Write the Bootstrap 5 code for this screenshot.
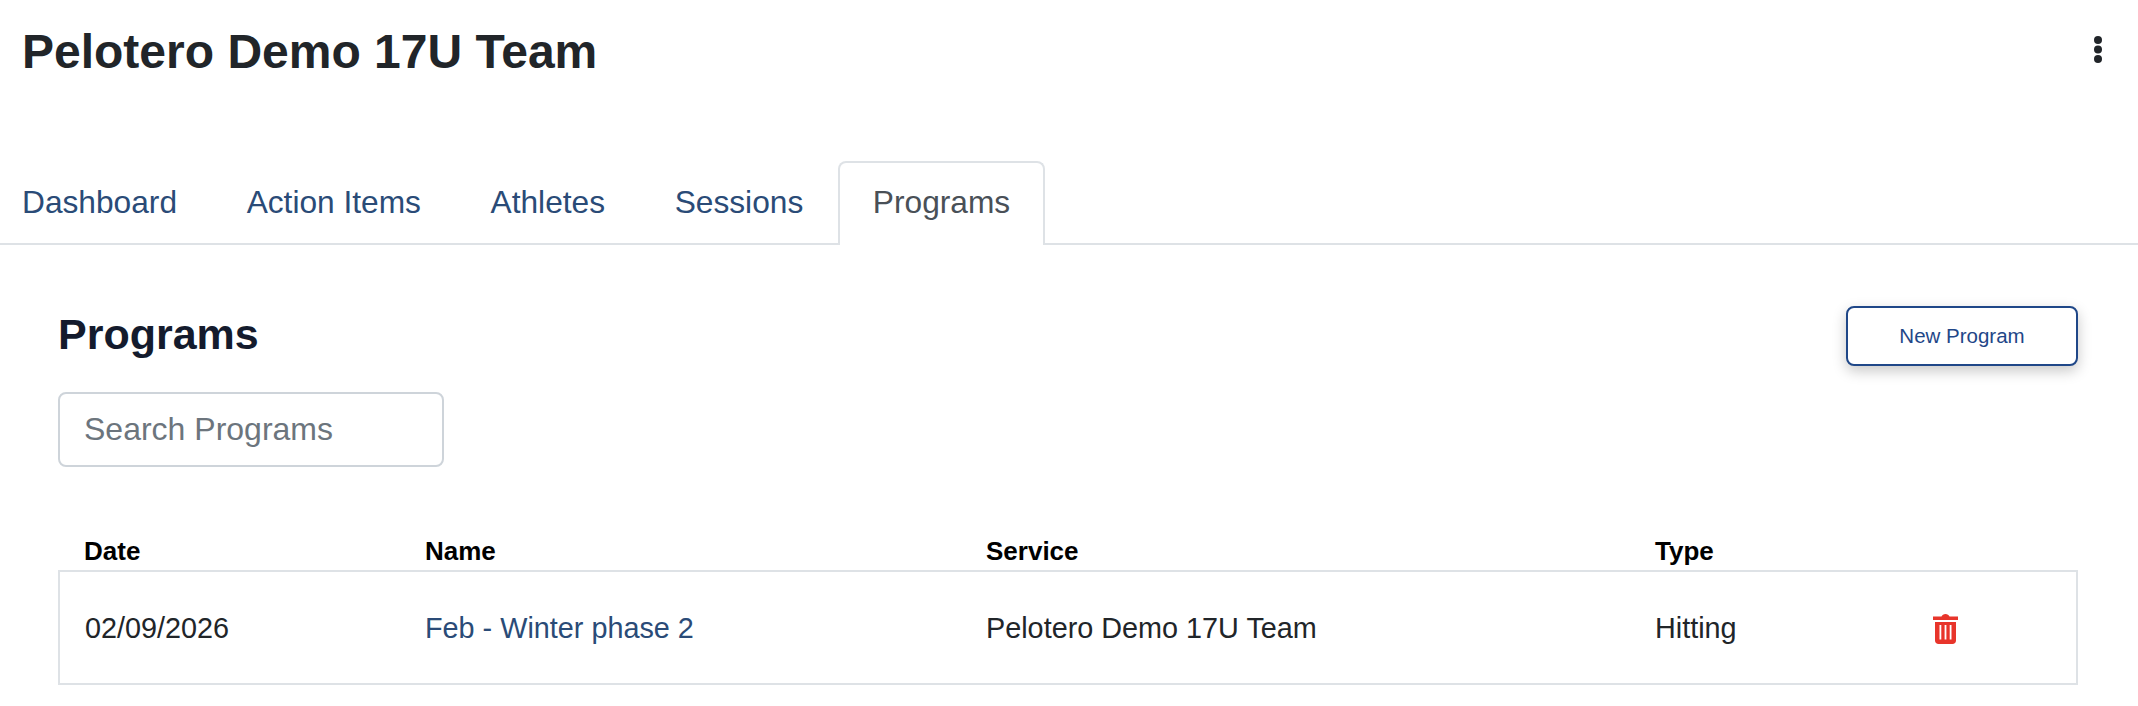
<!DOCTYPE html>
<html lang="en">
<head>
    <meta charset="UTF-8">
    <meta name="viewport" content="width=device-width, initial-scale=1.0">
    <title>Programs</title>
    <link rel="stylesheet" href="https://cdn.jsdelivr.net/npm/bootstrap@5.3.0/dist/css/bootstrap.min.css">
    <style>
        body { font-family: "Liberation Sans", Arial, sans-serif; color: #212529; background: #fff; }
        .team-header { height: 161px; padding: 22px 36px 0 22px; }
        .team-title { font-family: "Liberation Sans", Arial, sans-serif; font-weight: 700; font-size: 48px; line-height: 60px; margin: 0; color: #212529; }
        .kebab { width: 8px; height: 27px; margin-top: 14px; }
        .main-tabs { border-bottom: 2px solid #dee2e6; }
        .main-tabs .nav-link { font-size: 31.7px; line-height: 40px; padding: 19px 32.800px; color: #2a4b77; border: 2px solid transparent; border-bottom: 0; margin-bottom: -2px; border-radius: 8px 8px 0 0; height: 84px; }
        .main-tabs .nav-item:first-child .nav-link { padding-left: 20px; }
        .main-tabs .nav-link.active { color: #495057; background: #fff; border-color: #dee2e6; }
        .page-body { padding: 61px 60px 0 58px; }
        .page-heading { font-family: "Liberation Sans", Arial, sans-serif; font-weight: 700; font-size: 43px; line-height: 60px; margin: -2px 0 2px; color: #141b2d; }
        .new-btn { width: 232px; height: 60px; font-size: 20.5px; color: #1f4788; background: #fff; border: 2px solid #1f4788; border-radius: 8px; box-shadow: 0 5px 14px rgba(0, 0, 0, .22); }
        .search-box { width: 386px; height: 75px; font-size: 32px; padding: 0 24px; border: 2px solid #ced4da; border-radius: 8px; margin-top: 26px; }
        .search-box::placeholder { color: #6c757d; }
        .program-table { table-layout: fixed; width: 100%; margin: 69px 0 0; }
        .program-table th { font-size: 26px; line-height: 30px; color: #000; padding: 0 25px 4px; border: 0; }
        .program-table td { font-size: 28.8px; height: 113px; padding: 3px 25px 0; vertical-align: middle; border-top: 2px solid #dee2e6; border-bottom: 2px solid #dee2e6; }
        .program-table td:first-child { border-left: 2px solid #dee2e6; }
        .program-table td:last-child { border-right: 2px solid #dee2e6; }
        .program-table a { color: #2a4b77; text-decoration: none; }
        .col-date { width: 341px; }
        .col-name { width: 561px; }
        .col-service { width: 669px; }
        .col-type { width: 277px; }
        .trash { display: block; width: 25px; height: 30px; margin-left: 1px; }
    </style>
</head>
<body>
    <div class="team-header d-flex justify-content-between align-items-start">
        <h1 class="team-title">Pelotero Demo 17U Team</h1>
        <svg class="kebab" viewBox="0 0 8 27" aria-label="More">
            <circle cx="4" cy="4" r="4" fill="#212529"/>
            <circle cx="4" cy="13.5" r="4" fill="#212529"/>
            <circle cx="4" cy="23" r="4" fill="#212529"/>
        </svg>
    </div>

    <ul class="nav nav-tabs main-tabs">
        <li class="nav-item"><a class="nav-link" href="#">Dashboard</a></li>
        <li class="nav-item"><a class="nav-link" href="#">Action Items</a></li>
        <li class="nav-item"><a class="nav-link" href="#">Athletes</a></li>
        <li class="nav-item"><a class="nav-link" href="#">Sessions</a></li>
        <li class="nav-item"><a class="nav-link active" href="#">Programs</a></li>
    </ul>

    <div class="page-body">
        <div class="d-flex justify-content-between align-items-center">
            <h2 class="page-heading">Programs</h2>
            <button type="button" class="btn new-btn">New Program</button>
        </div>
        <input type="text" class="form-control search-box" placeholder="Search Programs">

        <table class="table program-table">
            <thead>
                <tr>
                    <th class="col-date">Date</th>
                    <th class="col-name">Name</th>
                    <th class="col-service">Service</th>
                    <th class="col-type">Type</th>
                    <th></th>
                </tr>
            </thead>
            <tbody>
                <tr>
                    <td>02/09/2026</td>
                    <td><a href="#">Feb - Winter phase 2</a></td>
                    <td>Pelotero Demo 17U Team</td>
                    <td>Hitting</td>
                    <td>
                        <svg class="trash" viewBox="0 0 25 30" aria-label="Delete">
                            <path fill="#e8352b" d="M0 2.500h8.500C9.200 1 10.500 0 12.500 0s3.300 1 4 2.500H25V6H0z"/>
                            <path fill="#e8352b" fill-rule="evenodd" d="M2 8h21v18.500c0 2-1.500 3.500-3.500 3.500h-14C3.500 30 2 28.500 2 26.500zM6.500 11v14.500h1.800V11zM11.600 11v14.500h1.800V11zM16.700 11v14.500h1.800V11z"/>
                        </svg>
                    </td>
                </tr>
            </tbody>
        </table>
    </div>

    <script src="https://cdn.jsdelivr.net/npm/bootstrap@5.3.0/dist/js/bootstrap.bundle.min.js"></script>
</body>
</html>
